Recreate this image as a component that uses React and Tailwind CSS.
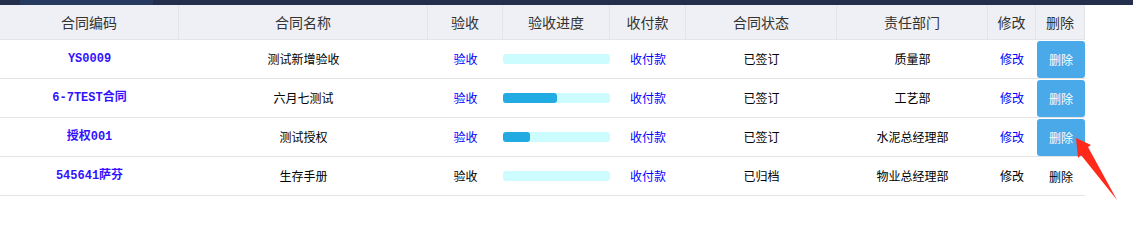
const rows = [
  { code: "YS0009", name: "测试新增验收", accept: true, pct: 0, status: "已签订", dept: "质量部", active: true },
  { code: "6-7TEST合同", name: "六月七测试", accept: true, pct: 50, status: "已签订", dept: "工艺部", active: true },
  { code: "授权001", name: "测试授权", accept: true, pct: 25, status: "已签订", dept: "水泥总经理部", active: true },
  { code: "545641萨芬", name: "生存手册", accept: false, pct: 0, status: "已归档", dept: "物业总经理部", active: false },
];

const cols = "grid grid-cols-[179px_249px_75px_107px_76px_151px_151px_48px_49px]";
const headers = ["合同编码", "合同名称", "验收", "验收进度", "收付款", "合同状态", "责任部门", "修改", "删除"];

export default function App() {
  return (
    <div className="relative h-[246px] w-[1133px] overflow-hidden bg-white text-[12px] font-['Noto_Sans_CJK_SC',sans-serif] text-black">
      {/* top nav strip */}
      <div className="flex h-[5px] bg-[#232f4c]">
        <div className="ml-[20px] w-[133px] bg-[#263a5f]" />
      </div>

      <div className="w-[1085px]">
        <div className={`${cols} h-[35px] border-b border-[#e2e4e9] bg-[#eef0f5] text-[14px] text-[#333]`}>
          {headers.map((h) => (
            <div key={h} className="flex items-center justify-center border-r border-[#e2e4e9]">
              {h}
            </div>
          ))}
        </div>

        {rows.map((r) => (
          <div key={r.code} className={`${cols} h-[39px] border-b border-[#e4e4e4]`}>
            <div className="flex items-center justify-center font-bold text-[#3311ff] font-['Liberation_Mono','Noto_Sans_CJK_SC',monospace]">
              {r.code}
            </div>
            <div className="flex items-center justify-center">{r.name}</div>
            <div className={`flex items-center justify-center ${r.accept ? "text-[#0000ff]" : ""}`}>验收</div>
            <div className="flex items-center">
              <div className="h-[10px] w-full rounded-[3px] bg-[#ccfcfd]">
                {r.pct > 0 && (
                  <div className="h-full rounded-[3px] bg-[#22abe3]" style={{ width: `${r.pct}%` }} />
                )}
              </div>
            </div>
            <div className="flex items-center justify-center text-[#0000ff]">收付款</div>
            <div className="flex items-center justify-center">{r.status}</div>
            <div className="flex items-center justify-center">{r.dept}</div>
            <div className={`flex items-center justify-center ${r.active ? "text-[#0000ff]" : ""}`}>修改</div>
            <div className="flex items-start pl-px pt-px">
              {r.active ? (
                <button className="flex h-[37px] w-[48px] items-center justify-center rounded-[3px] bg-[#4aa9e9] text-[12px] text-white">
                  删除
                </button>
              ) : (
                <span className="flex h-[37px] w-[48px] items-center justify-center">删除</span>
              )}
            </div>
          </div>
        ))}
      </div>

      {/* red annotation arrow */}
      <svg className="absolute left-[1070px] top-[130px]" width="60" height="80" viewBox="0 0 60 80">
        <polygon points="6,8 21,15 18,17 47,70 11,25 8,28" fill="#ff2a1a" />
      </svg>
    </div>
  );
}
